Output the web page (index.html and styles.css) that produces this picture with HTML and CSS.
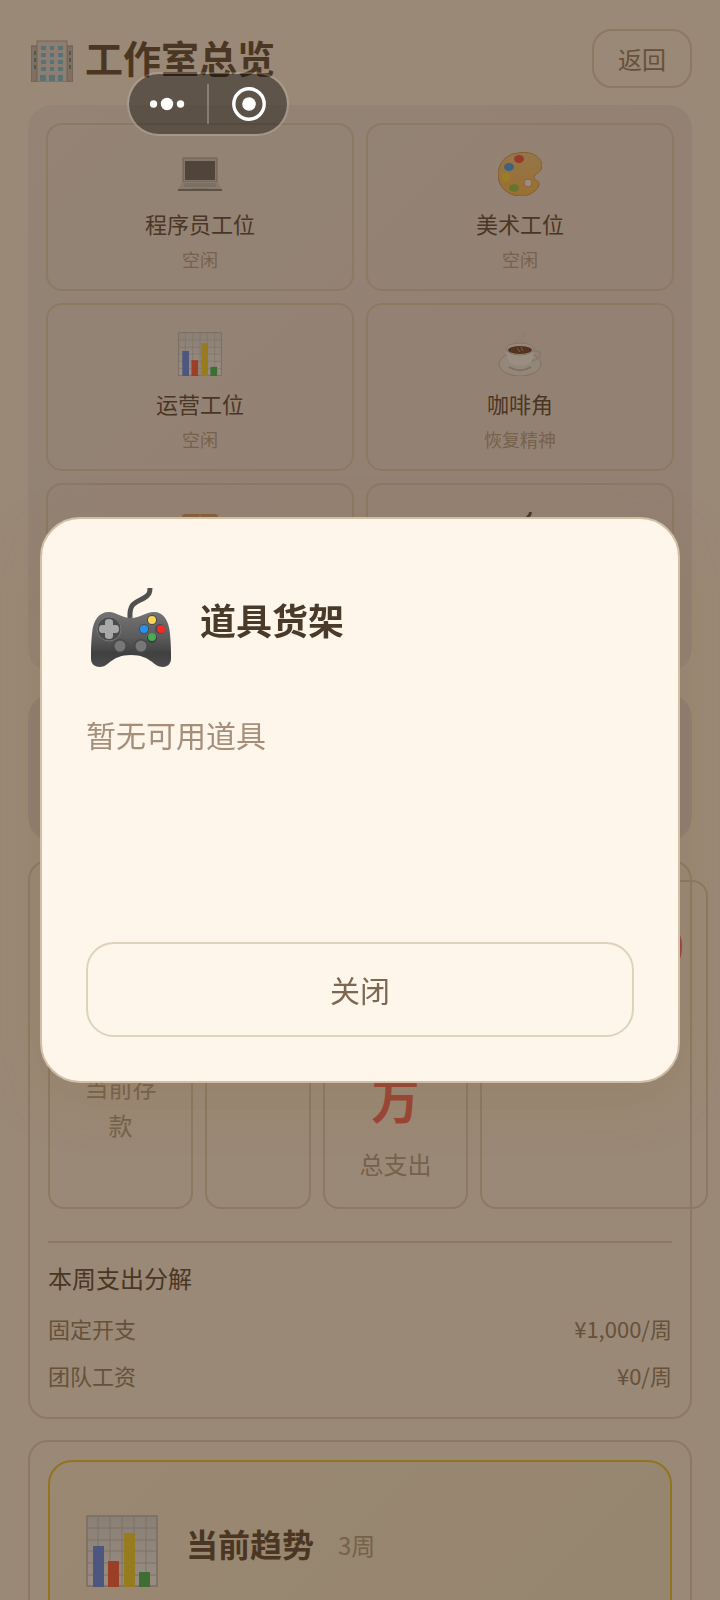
FILE: index.html
```
<!DOCTYPE html>
<html lang="zh-CN">
<head>
<meta charset="UTF-8">
<meta name="viewport" content="width=device-width, initial-scale=1.0">
<title>工作室总览</title>
<link rel="stylesheet" href="styles.css">
</head>
<body>
  <!-- shared icons -->
  <svg class="sprite" aria-hidden="true">
    <defs>
      <linearGradient id="pad-body" x1="0" y1="0" x2="0" y2="1">
        <stop offset="0" stop-color="#737373"/>
        <stop offset="0.45" stop-color="#5c5c5c"/>
        <stop offset="0.75" stop-color="#404040"/>
        <stop offset="1" stop-color="#4c4c4c"/>
      </linearGradient>
      <linearGradient id="sheet" x1="0" y1="0" x2="0" y2="1">
        <stop offset="0" stop-color="#e0e4e6"/>
        <stop offset="1" stop-color="#fcfeff"/>
      </linearGradient>
      <linearGradient id="wood" x1="0" y1="0" x2="0" y2="1">
        <stop offset="0" stop-color="#f4cf90"/>
        <stop offset="1" stop-color="#ffc45c"/>
      </linearGradient>
    </defs>
    <symbol id="gamepad" viewBox="0 0 80 80">
      <path d="M39 30C38 14 46 14 53 10C58 7 59 5 59 0" fill="none" stroke="#505050" stroke-width="5"/>
      <path d="M1 46C2 32 8 24 18 24C26 24 30 30 40 30C50 30 54 24 63 24C72 24 78 32 79 46C80 56 80 64 80 71C80 76 76 79 72 79C62 79 60 67 40 67C20 67 18 79 9 79C4 79 0 76 0 71C0 62 0 56 1 46Z" fill="url(#pad-body)"/>
      <circle cx="18" cy="41" r="12" fill="#4b4b4b" stroke="#777" stroke-width="1"/>
      <path d="M14 34q0-3 4-3t4 3v3h3q3 0 3 4t-3 4h-3v3q0 3-4 3t-4-3v-3h-3q-3 0-3-4t3-4h3z" fill="#a8a8a8"/>
      <circle cx="61" cy="32" r="5" fill="#4a4a4a"/><circle cx="61" cy="32" r="4" fill="#f8d45a"/>
      <circle cx="69" cy="41" r="5" fill="#4a4a4a"/><circle cx="70" cy="41" r="4" fill="#f02c26"/>
      <circle cx="53" cy="41" r="5" fill="#4a4a4a"/><circle cx="53" cy="41" r="4" fill="#2692f0"/>
      <circle cx="61" cy="50" r="5" fill="#3c3c3c"/><circle cx="61" cy="49" r="4" fill="#48ad50"/>
      <circle cx="29" cy="58" r="7" fill="#484848"/><circle cx="29" cy="58" r="5.5" fill="#777"/>
      <circle cx="50" cy="58" r="7" fill="#484848"/><circle cx="50" cy="58" r="5.5" fill="#777"/>
    </symbol>
    <symbol id="chart" viewBox="0 0 72 72">
      <rect x="1" y="1" width="70" height="70" fill="url(#sheet)" stroke="#bcbcbc" stroke-width="1.5"/>
      <path d="M12 1v70M24 1v70M36 1v70M48 1v70M60 1v70M1 13h70M1 25h70M1 36h70M1 48h70M1 60h70" stroke="#c6c6c6" stroke-width="1"/>
      <rect x="7" y="31" width="11" height="41" fill="#6290f6"/>
      <rect x="22" y="46" width="11" height="26" fill="#fc6448"/>
      <rect x="38" y="18" width="11" height="54" fill="#f8da38"/>
      <rect x="53" y="57" width="11" height="15" fill="#46c060"/>
    </symbol>
  </svg>

  <div class="page">
    <header class="page-header">
      <h1 class="page-title">
        <svg class="title-icon" viewBox="0 0 42 42" aria-hidden="true">
          <path d="M0 6h6v36H0zM36 6h6v36h-6z" fill="#cbc3c0" stroke="#a3988f"/>
          <rect x="6" y="1" width="30" height="41" fill="#e2e0de" stroke="#b8b0a8"/>
          <path d="M10 6h5v4h-5zM19 6h4v4h-4zM27 6h5v4h-5zM10 13h5v4h-5zM19 13h4v4h-4zM27 13h5v4h-5zM10 20h5v4h-5zM19 20h4v4h-4zM27 20h5v4h-5zM10 27h5v4h-5zM19 27h4v4h-4zM27 27h5v4h-5zM9 35h6v6H9zM18 35h6v6h-6zM27 35h5v6h-5z" fill="#7cc8e0"/>
          <path d="M3 11h2v4H3zM3 18h2v4H3zM3 25h2v4H3zM38 11h2v4h-2zM38 18h2v4h-2zM38 25h2v4h-2z" fill="#5c98a8"/>
        </svg>
        工作室总览
      </h1>
      <button class="back-btn" type="button">返回</button>
    </header>

    <section class="desk-grid">
      <div class="desk-card">
        <svg class="desk-icon" viewBox="0 0 44 44" aria-hidden="true">
          <path d="M5 6h34v24H5z" fill="#d0d0ce" stroke="#a4a09a"/>
          <rect x="7" y="9" width="30" height="19" fill="#6c6e70"/>
          <path d="M4 30h36l4 8H0z" fill="#d6d8d8"/>
          <path d="M7 32h30M6 34h32M14 37h16" stroke="#b0aeaa"/>
          <path d="M0 38h44" stroke="#88847e" stroke-width="2"/>
        </svg>
        <div class="desk-name">程序员工位</div>
        <div class="desk-status">空闲</div>
      </div>
      <div class="desk-card">
        <svg class="desk-icon" viewBox="0 0 44 44" aria-hidden="true">
          <path d="M20 1C36-2 44 7 44 14C44 21 36 21 36 26C36 29 42 28 41 33C39 40 30 44 23 44C9 44 0 34 0 23C0 10 9 2 20 1Z" fill="url(#wood)" stroke="#d89c50"/>
          <ellipse cx="21" cy="7" rx="5" ry="4" fill="#f65a4a"/>
          <ellipse cx="11" cy="15" rx="5" ry="4" fill="#48a8f4"/>
          <ellipse cx="8" cy="25" rx="4" ry="4" fill="#ffe43a"/>
          <ellipse cx="16" cy="36" rx="5" ry="4" fill="#98cc54"/>
          <circle cx="30" cy="31" r="4" fill="#fffaf4" stroke="#d8ae74"/>
        </svg>
        <div class="desk-name">美术工位</div>
        <div class="desk-status">空闲</div>
      </div>
      <div class="desk-card">
        <svg class="desk-icon" aria-hidden="true"><use href="#chart"/></svg>
        <div class="desk-name">运营工位</div>
        <div class="desk-status">空闲</div>
      </div>
      <div class="desk-card">
        <svg class="desk-icon" viewBox="0 0 44 44" aria-hidden="true">
          <path d="M18 12C16 8 22 7 20 3M24 11C22 7 28 6 26 1" fill="none" stroke="#dcdad6"/>
          <ellipse cx="22" cy="32" rx="21" ry="12" fill="#f0f2f0" stroke="#c8c4bc"/>
          <path d="M35 20C44 16 46 26 34 29" fill="none" stroke="#d8d8d4" stroke-width="2"/>
          <path d="M8 17C8 29 13 34 22 34C31 34 36 29 36 17Z" fill="#fff"/>
          <path d="M11 35c7 4 15 4 22 0" fill="none" stroke="#c4c0b8" stroke-width="2"/>
          <ellipse cx="22" cy="17" rx="14" ry="6" fill="#f8f8f4" stroke="#d0ccc4"/>
          <ellipse cx="22" cy="18" rx="12" ry="4" fill="#744a36"/>
          <path d="M19 16l3 4M23 15l2 4" stroke="#c3a48b"/>
        </svg>
        <div class="desk-name">咖啡角</div>
        <div class="desk-status">恢复精神</div>
      </div>
      <div class="desk-card">
        <svg class="desk-icon" viewBox="0 0 44 44" aria-hidden="true">
          <rect x="4" y="2" width="36" height="41" rx="3" fill="#d8a070"/>
          <path d="M13 5h7l2-3 2 3h7v5H13z" fill="#c8c4be"/>
          <rect x="8" y="9" width="28" height="30" fill="#f2efea"/>
        </svg>
        <div class="desk-name">项目看板</div>
        <div class="desk-status">空闲</div>
      </div>
      <div class="desk-card">
        <svg class="desk-icon" aria-hidden="true"><use href="#gamepad"/></svg>
        <div class="desk-name">道具货架</div>
        <div class="desk-status">空闲</div>
      </div>
    </section>

    <section class="team-panel"></section>

    <section class="panel">
      <div class="stats">
        <div class="stat">
          <div class="stat-value">¥50<br>万</div>
          <div class="stat-label">当前存款</div>
        </div>
        <div class="stat">
          <div class="stat-value">¥0</div>
          <div class="stat-label">收入</div>
        </div>
        <div class="stat">
          <div class="stat-value cost">¥<br>0.1<br>万</div>
          <div class="stat-label">总支出</div>
        </div>
        <div class="stat stat-wide">
          <div class="stat-value cost">-¥1,000</div>
          <div class="stat-label">每周支出</div>
        </div>
      </div>
      <div class="costs">
        <h2 class="costs-title">本周支出分解</h2>
        <div class="cost-row"><span>固定开支</span><span>¥1,000/周</span></div>
        <div class="cost-row"><span>团队工资</span><span>¥0/周</span></div>
      </div>
    </section>

    <section class="panel">
      <div class="trend">
        <svg class="trend-icon" aria-hidden="true"><use href="#chart"/></svg>
        <h2 class="trend-title">当前趋势</h2>
        <span class="trend-weeks">3周</span>
      </div>
    </section>
  </div>

  <div class="overlay">
    <div class="modal" role="dialog" aria-labelledby="modal-title">
      <div class="modal-header">
        <svg class="modal-icon" aria-hidden="true"><use href="#gamepad"/></svg>
        <h2 class="modal-title" id="modal-title">道具货架</h2>
      </div>
      <div class="modal-body">暂无可用道具</div>
      <button class="close-btn" type="button">关闭</button>
    </div>
  </div>

  <div class="capsule">
    <button class="capsule-btn" type="button" aria-label="更多">
      <svg width="36" height="36" viewBox="0 0 36 36" fill="#fff">
        <circle cx="3.5" cy="18" r="3.7"/><circle cx="17" cy="18" r="6.2"/><circle cx="30.5" cy="18" r="3.7"/>
      </svg>
    </button>
    <button class="capsule-btn" type="button" aria-label="关闭小程序">
      <svg width="38" height="36" viewBox="0 0 38 36">
        <circle cx="20" cy="18" r="15.2" fill="none" stroke="#fff" stroke-width="3.4"/><circle cx="20" cy="18" r="6.8" fill="#fff"/>
      </svg>
    </button>
  </div>
</body>
</html>
```
FILE: styles.css
```
* {
  box-sizing: border-box;
}
body {
  margin: 0;
  height: 100vh;
  overflow: hidden; /* no scrolling while the modal is open */
  font-family: "Noto Sans CJK SC", sans-serif;
  line-height: 1.6;
  color: #605042;
  background: #fef6e8;
}
h1, h2 {
  margin: 0;
}
button {
  font-family: inherit;
  cursor: pointer;
}
.sprite {
  position: absolute;
  width: 0;
  height: 0;
}
.page {
  height: 100vh;
  overflow: hidden;
  padding: 29px 28px 0;
}

/* header */
.page-header {
  display: flex;
  justify-content: space-between;
  align-items: flex-start;
  margin-bottom: 17px;
}
.page-title {
  display: flex;
  align-items: center;
  gap: 12px;
  padding-left: 3px;
  font-size: 38px;
  line-height: 56px;
}
.title-icon {
  width: 42px;
  height: 42px;
  margin-top: 8px;
}
.back-btn {
  height: 59px;
  padding: 0 24px;
  border: 2px solid #e2d6be;
  border-radius: 20px;
  background: none;
  font-size: 24px;
  color: #98866e;
}

/* desks */
.desk-grid {
  display: grid;
  grid-template-columns: 1fr 1fr;
  gap: 12px;
  padding: 18px 18px 21px;
  border-radius: 24px;
  background: linear-gradient(135deg, #f2ece4, #f0e6e0);
  margin-bottom: 22px;
}
.desk-card {
  padding: 14px 14px 15px;
  border: 2px solid #e2d6be;
  border-radius: 16px;
  text-align: center;
}
.desk-icon {
  display: block;
  width: 44px;
  height: 44px;
  margin: 13px auto 10px;
}
.desk-name {
  font-size: 22px;
  line-height: 35px;
}
.desk-status {
  margin-top: 4px;
  font-size: 18px;
  line-height: 29px;
  color: #b8a694;
}
.team-panel {
  height: 147px;
  margin-bottom: 19px;
  border-radius: 24px;
  background: #e8e0de;
}

/* finance */
.panel {
  margin-bottom: 21px;
  padding: 18px;
  border: 2px solid #e2d6c2;
  border-radius: 20px;
}
.stats {
  display: grid;
  grid-template-columns: minmax(145px, 1fr) minmax(106px, 1fr) minmax(145px, 1fr) minmax(228px, 1fr);
  gap: 12px;
}
.stat {
  padding: 24px;
  border: 2px solid #e2d6be;
  border-radius: 16px;
  text-align: center;
}
.stat-wide {
  padding: 24px 22px;
}
.stat-wide .stat-value {
  text-align: right;
}
.stat-value {
  font-size: 48px;
  font-weight: bold;
  line-height: 77px;
  white-space: nowrap;
}
.stat-value.cost {
  color: #fc6c66;
}
.stat-label {
  margin-top: 8px;
  font-size: 24px;
  line-height: 38px;
  color: #b8a690;
}
.costs {
  margin-top: 32px;
  padding-top: 16px;
  border-top: 2px solid #e2d6c2;
}
.costs-title {
  margin-bottom: 8px;
  font-size: 24px;
  font-weight: normal;
  line-height: 38px;
}
.cost-row {
  display: flex;
  justify-content: space-between;
  padding: 6px 0;
  font-size: 22px;
  line-height: 35px;
  color: #98866e;
}

/* trend */
.trend {
  display: flex;
  align-items: center;
  min-height: 168px;
  padding: 0 36px;
  border: 2px solid #eccc36;
  border-radius: 24px;
  background: linear-gradient(135deg, #fef4de, #f8f0d8);
}
.trend-icon {
  width: 72px;
  height: 72px;
  margin: 14px 28px 0 0;
}
.trend-title {
  font-size: 32px;
}
.trend-weeks {
  margin: 2px 0 0 24px;
  font-size: 24px;
  color: #b8a690;
}

/* modal */
.overlay {
  position: fixed;
  inset: 0;
  display: flex;
  align-items: center;
  justify-content: center;
  padding: 40px;
  background: rgba(54, 28, 6, 0.5);
}
.modal {
  width: 100%;
  padding: 44px;
  border: 2px solid #d0bfa4;
  border-radius: 40px;
  background: #fef6ea;
  box-shadow: 0 16px 60px rgba(139, 105, 60, 0.2);
}
.modal-header {
  display: flex;
  align-items: center;
  gap: 29px;
  min-height: 114px;
  margin-bottom: 33px;
  padding-left: 5px;
}
.modal-icon {
  width: 80px;
  height: 80px;
  margin-top: 16px;
}
.modal-title {
  font-size: 36px;
  color: #4a3a2a;
}
.modal-body {
  min-height: 200px;
  margin-bottom: 32px;
  font-size: 30px;
  color: #a68f7a;
}
.close-btn {
  width: 100%;
  height: 95px;
  padding: 0 0 2px;
  border: 2px solid #e0d1bd;
  border-radius: 28px;
  background: none;
  font-size: 30px;
  color: #7d6750;
}

/* mini program capsule */
.capsule {
  position: fixed;
  top: 72px;
  left: 127px;
  display: flex;
  align-items: center;
  width: 162px;
  height: 64px;
  border: 2px solid rgba(255, 255, 255, 0.16);
  border-radius: 32px;
  background: rgba(0, 0, 0, 0.38);
  background-clip: padding-box;
}
.capsule-btn {
  display: flex;
  flex: 1;
  align-items: center;
  justify-content: center;
  height: 40px;
  padding: 0;
  border: 0;
  background: none;
}
.capsule-btn + .capsule-btn {
  border-left: 2px solid rgba(255, 255, 255, 0.25);
}
```
